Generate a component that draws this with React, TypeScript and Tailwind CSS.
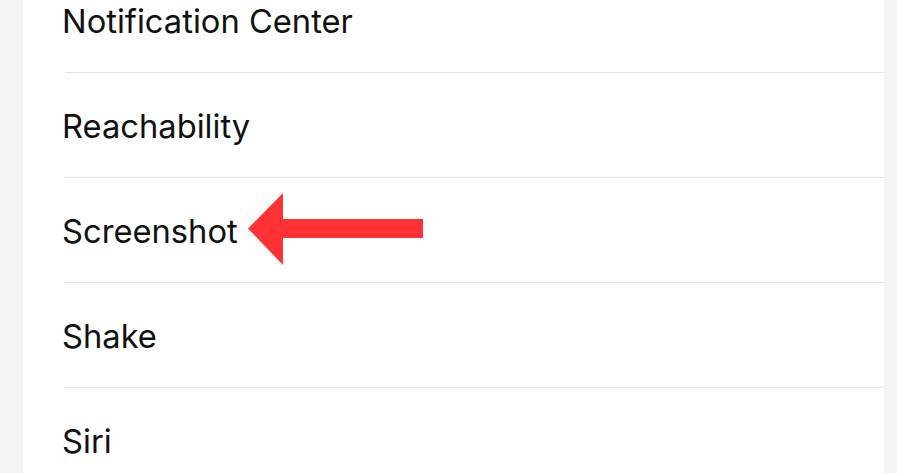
import React from 'react';

const rows = ['Notification Center', 'Reachability', 'Screenshot', 'Shake', 'Siri'];

function Arrow() {
  return (
    <svg width="175" height="72" viewBox="0 0 175 72" className="mb-[4px] ml-[10px] shrink-0">
      <polygon points="0,35.5 35,0 35,26 175,26 175,45 35,45 35,72" fill="#fe3234" />
    </svg>
  );
}

export default function App() {
  return (
    <div className="flex h-[473px] w-full overflow-hidden bg-[#f2f2f7]" style={{ fontFamily: 'Inter, "Liberation Sans", sans-serif' }}>
      <div className="w-[23px] shrink-0" />
      <div className="flex-1 bg-white">
        <div className="-mt-[32px] flex flex-col">
          {rows.map(label => (
            <div key={label} className="ml-[42px] flex h-[105px] items-center border-b border-[#e3e3e6] pt-[2px]">
              <span className="-ml-[3px] text-[32.7px] leading-none text-[#111111]">{label}</span>
              {label === 'Screenshot' && <Arrow />}
            </div>
          ))}
        </div>
      </div>
      <div className="w-[13px] shrink-0" />
    </div>
  );
}
